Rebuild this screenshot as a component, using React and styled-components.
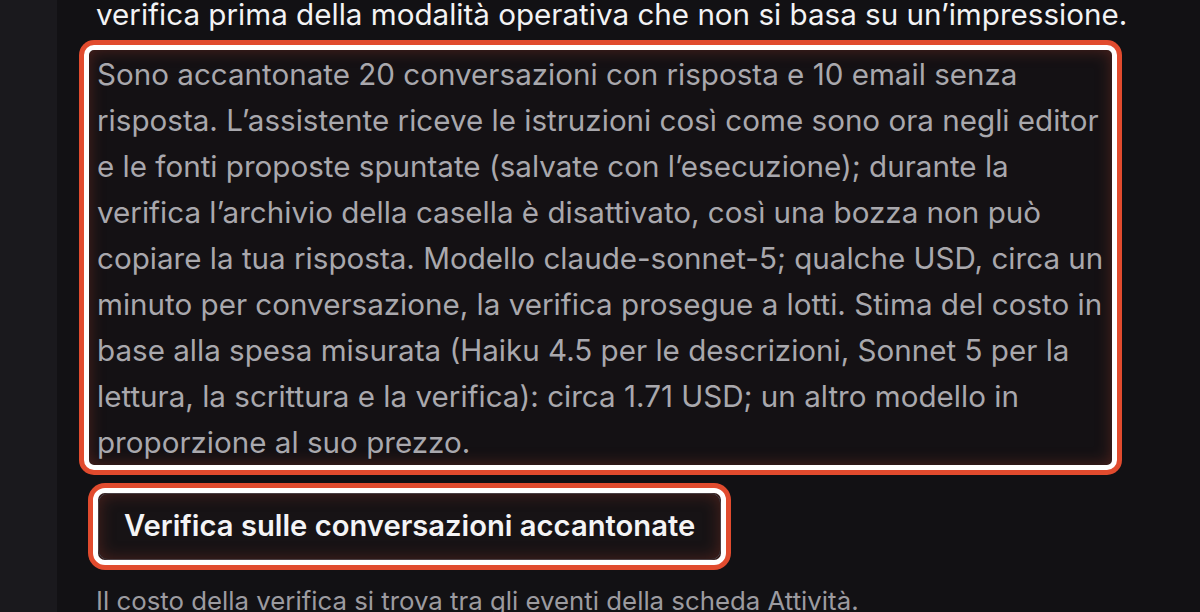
import React from 'react';
import styled, { createGlobalStyle, css } from 'styled-components';

const GlobalStyle = createGlobalStyle`
   html, body {
      margin: 0;
      padding: 0;
      background: #121114;
   }
   body {
      font-family: Inter, "Noto Sans", "Liberation Sans", sans-serif;
      -webkit-font-smoothing: antialiased;
   }
`;

// anello rosso + bordo bianco attorno all'elemento evidenziato
const ring = css`
   border: 5px solid #ffffff;
   box-shadow: 0 0 0 5px #e14b2e, inset 0 0 16px rgba(150, 55, 40, 0.45);
`;

const Page = styled.div`
   display: flex;
   width: 1200px;
   height: 612px;
   overflow: hidden;
`;

const Sidebar = styled.aside`
   flex: 0 0 57px;
   background: #1a191d;
`;

const Main = styled.main`
   flex: 1;
   overflow: hidden;
   padding: 0 20px 0 39px;
`;

const Content = styled.div`
   display: flex;
   flex-direction: column;
   align-items: flex-start;
   margin-top: -9px;
`;

const Lead = styled.p`
   margin: 0;
   font-size: 29.6px;
   line-height: 46px;
   color: #f3f3f4;
   white-space: nowrap;
`;

const Notice = styled.div`
   ${ring};
   box-sizing: border-box;
   width: 1033px;
   margin: 8px 0 0 -12px;
   padding: 1px 7px 0 8px;
   border-radius: 10px;
   background: #141114;
   font-size: 29.6px;
   line-height: 46px;
   color: #a9a8ad;
`;

const ButtonWrap = styled.div`
   ${ring};
   margin: 18px 0 0 -3px;
   border-radius: 12px;
   background: #141114;
`;

const Button = styled.button`
   display: block;
   margin: 0;
   padding: 16px 25px 17px;
   border: 1px solid #4a3f43;
   border-radius: 10px;
   background: #171315;
   box-shadow: inset 0 0 16px rgba(150, 55, 40, 0.4);
   font-family: inherit;
   font-size: 29.2px;
   font-weight: 600;
   line-height: 32px;
   color: #f4f4f5;
   cursor: pointer;
`;

const Hint = styled.p`
   margin: 18px 0 0;
   font-size: 25.8px;
   line-height: 36px;
   color: #9c9ba0;
`;

export default function App() {
   return (
      <>
         <GlobalStyle />
         <Page>
            <Sidebar />
            <Main>
               <Content>
                  <Lead>verifica prima della modalità operativa che non si basa su un’impressione.</Lead>
                  <Notice>
                     Sono accantonate 20 conversazioni con risposta e 10 email senza risposta. L’assistente
                     riceve le istruzioni così come sono ora negli editor e le fonti proposte spuntate
                     (salvate con l’esecuzione); durante la verifica l’archivio della casella è disattivato,
                     così una bozza non può copiare la tua risposta. Modello claude-sonnet-5; qualche USD,
                     circa un minuto per conversazione, la verifica prosegue a lotti. Stima del costo in
                     base alla spesa misurata (Haiku 4.5 per le descrizioni, Sonnet 5 per la lettura, la
                     scrittura e la verifica): circa 1.71 USD; un altro modello in proporzione al suo prezzo.
                  </Notice>
                  <ButtonWrap>
                     <Button type="button">Verifica sulle conversazioni accantonate</Button>
                  </ButtonWrap>
                  <Hint>Il costo della verifica si trova tra gli eventi della scheda Attività.</Hint>
               </Content>
            </Main>
         </Page>
      </>
   );
}
